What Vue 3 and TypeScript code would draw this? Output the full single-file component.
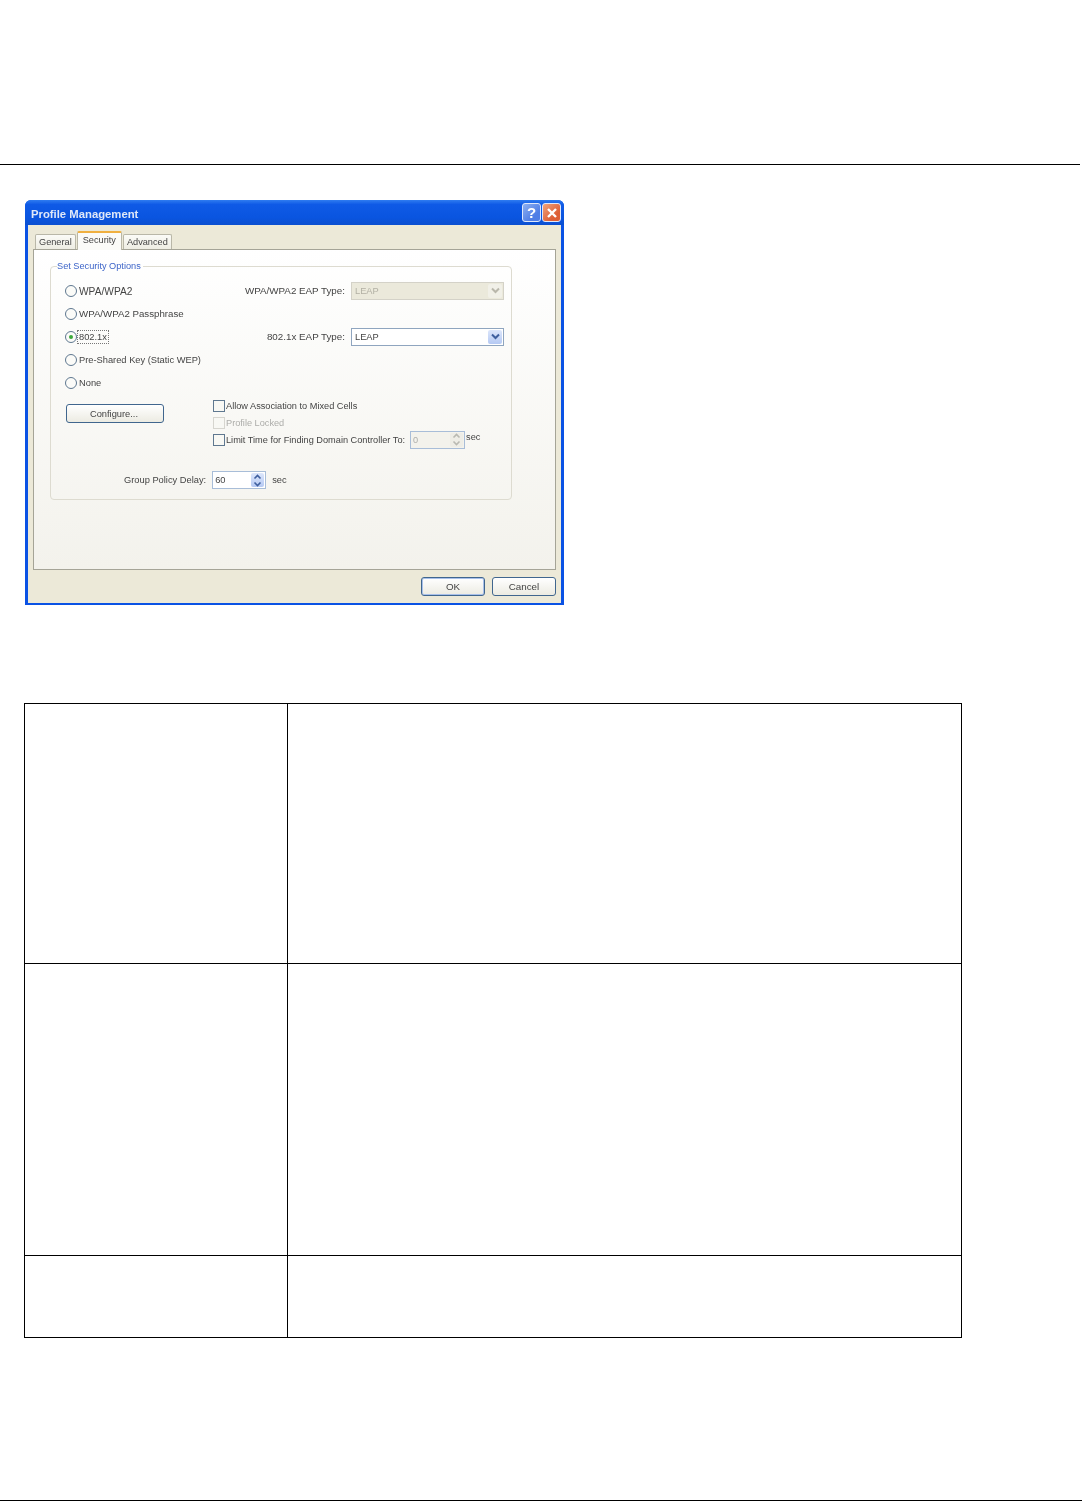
<template>
  <div class="page">
    <header class="page-head"></header>

    <section class="dialog">
      <div class="titlebar">
        <span class="titlebar__text">Profile Management</span>
        <span class="capbtn capbtn--help">?</span>
        <span class="capbtn capbtn--close">
          <svg width="12" height="12" viewBox="0 0 12 12"><path d="M2 2l8 8M10 2l-8 8" stroke="#fff" stroke-width="2.4" /></svg>
        </span>
      </div>

      <div class="dialog__body">
        <div class="tabs">
          <span class="tab tab--first">General</span>
          <span class="tab tab--active">Security</span>
          <span class="tab">Advanced</span>
        </div>

        <div class="panel">
          <fieldset class="group">
            <legend class="group__legend">Set Security Options</legend>

            <div class="options">
              <div v-for="opt in options" :key="opt.label" class="option">
                <span class="radio" :class="{ 'radio--on': opt.selected }"></span>
                <span class="option__label" :class="[opt.labelClass, { 'option__label--focus': opt.selected }]">{{ opt.label }}</span>
                <div v-if="opt.eap" class="eap">
                  <span class="eap__label">{{ opt.eap }}</span>
                  <span class="select" :class="{ 'select--off': opt.eapOff }">
                    <span class="select__value">LEAP</span>
                    <span class="select__btn">
                      <svg width="9" height="7" viewBox="0 0 9 7"><path d="M1 1.5l3.5 3.5L8 1.5" fill="none" :stroke="opt.eapOff ? '#b9b7ab' : '#3f5f9e'" stroke-width="2" /></svg>
                    </span>
                  </span>
                </div>
              </div>
            </div>

            <div class="lower">
              <div class="lower__left">
                <span class="btn btn--configure">Configure...</span>
              </div>
              <div class="checks">
                <div class="check">
                  <span class="box"></span>
                  <span>Allow Association to Mixed Cells</span>
                </div>
                <div class="check check--off">
                  <span class="box box--off"></span>
                  <span>Profile Locked</span>
                </div>
                <div class="check">
                  <span class="box"></span>
                  <span>Limit Time for Finding Domain Controller To:</span>
                  <span class="spin spin--off">
                    <span class="spin__value">0</span>
                    <span class="spin__btns">
                      <svg width="9" height="6" viewBox="0 0 9 6"><path d="M1.5 4.5l3-3 3 3" fill="none" stroke="#b9b9b2" stroke-width="1.6" /></svg>
                      <svg width="9" height="6" viewBox="0 0 9 6"><path d="M1.5 1.5l3 3 3-3" fill="none" stroke="#b9b9b2" stroke-width="1.6" /></svg>
                    </span>
                  </span>
                  <span class="check__unit">sec</span>
                </div>
              </div>
            </div>

            <div class="delay">
              <span class="delay__label">Group Policy Delay:</span>
              <span class="spin spin--delay">
                <span class="spin__value">60</span>
                <span class="spin__btns spin__btns--on">
                  <svg width="9" height="6" viewBox="0 0 9 6"><path d="M1.5 4.5l3-3 3 3" fill="none" stroke="#3f5f9e" stroke-width="1.6" /></svg>
                  <svg width="9" height="6" viewBox="0 0 9 6"><path d="M1.5 1.5l3 3 3-3" fill="none" stroke="#3f5f9e" stroke-width="1.6" /></svg>
                </span>
              </span>
              <span>sec</span>
            </div>
          </fieldset>
        </div>

        <div class="actions">
          <span class="btn btn--default">OK</span>
          <span class="btn">Cancel</span>
        </div>
      </div>
    </section>

    <table class="params">
      <tbody>
        <tr v-for="height in rowHeights" :key="height" :style="{ height: height + 'px' }">
          <td class="params__name"></td>
          <td></td>
        </tr>
      </tbody>
    </table>

    <footer class="page-foot"></footer>
  </div>
</template>

<script setup lang="ts">
interface SecurityOption {
  label: string
  labelClass?: string
  selected?: boolean
  eap?: string
  eapOff?: boolean
}

const options: SecurityOption[] = [
  { label: 'WPA/WPA2', labelClass: 'option__label--caps', eap: 'WPA/WPA2 EAP Type:', eapOff: true },
  { label: 'WPA/WPA2 Passphrase', labelClass: 'option__label--mixed' },
  { label: '802.1x', selected: true, eap: '802.1x EAP Type:' },
  { label: 'Pre-Shared Key (Static WEP)' },
  { label: 'None' },
]

const rowHeights = [260, 292, 82]
</script>

<style>
html,
body {
  background: #fff;
}
</style>

<style scoped>
.page {
  width: 1090px;
  height: 1501px;
  box-sizing: border-box;
  padding-top: 164px;
  overflow: hidden;
  font-family: 'Liberation Sans', Arial, sans-serif;
  font-size: 9.3px;
  color: #444;
}

.page-head {
  width: 1080px;
  height: 1px;
  background: #000;
}

.dialog {
  width: 539px;
  height: 405px;
  margin: 35px 0 0 25px;
  box-sizing: border-box;
  display: flex;
  flex-direction: column;
  background: #0a52e4;
  border-radius: 6px 6px 0 0;
  filter: blur(0.6px);
}

.titlebar {
  height: 25px;
  flex: none;
  display: flex;
  align-items: center;
  gap: 1px;
  padding: 0 3px 0 6px;
  border-radius: 6px 6px 0 0;
  background: linear-gradient(#2f7cf0 0, #0f5ae6 18%, #0a55e0 70%, #0b4fd0 100%);
}

.titlebar__text {
  flex: 1;
  padding-top: 2px;
  color: #dfe8f8;
  font-size: 11.3px;
  font-weight: 700;
}

.capbtn {
  width: 19px;
  height: 19px;
  box-sizing: border-box;
  display: flex;
  align-items: center;
  justify-content: center;
  border: 1px solid #dfe8fa;
  border-radius: 3px;
  color: #fff;
  font-size: 15px;
  font-weight: 700;
}

.capbtn--help {
  background: linear-gradient(135deg, #8db0f0, #4f7ee6 70%);
}

.capbtn--close {
  background: linear-gradient(135deg, #f0a47c, #dd5f36 70%);
}

.dialog__body {
  flex: 1;
  min-height: 0;
  margin: 0 3px 2px;
  padding: 6px 5px 0;
  background: #ece9d8;
  display: flex;
  flex-direction: column;
}

.tabs {
  height: 18px;
  flex: none;
  display: flex;
  align-items: flex-end;
  padding-left: 2px;
  position: relative;
  z-index: 1;
}

.tab {
  height: 15px;
  box-sizing: border-box;
  display: flex;
  align-items: center;
  padding: 0 3px 1px;
  margin-left: 1px;
  border: 1px solid #b9b7a8;
  border-bottom: none;
  border-radius: 2px 2px 0 0;
  background: linear-gradient(#fbfbf7, #eeede3);
  font-size: 9.2px;
}

.tab--first {
  margin-left: 0;
}

.tab--active {
  height: 19px;
  margin-bottom: -1px;
  padding: 0 5px 4px;
  background: #fbfbf8;
  border-top: 2px solid #f0b040;
}

.panel {
  height: 321px;
  flex: none;
  box-sizing: border-box;
  padding: 10px 43px 0 16px;
  border: 1px solid #a5a497;
  background: linear-gradient(#ffffff, #f3f2ec);
}

.group {
  height: 240px;
  margin: 0;
  padding: 0 0 0 14px;
  box-sizing: border-box;
  border: 1px solid #dddbd0;
  border-radius: 4px;
}

.group__legend {
  margin-left: -8px;
  padding: 0 2px 0 0;
  color: #3c64c8;
  font-size: 9.2px;
  line-height: 12px;
}

.options {
  padding-top: 7px;
  padding-right: 7px;
}

.option {
  height: 23px;
  display: flex;
  align-items: center;
  gap: 2px;
}

.radio {
  width: 12px;
  height: 12px;
  box-sizing: border-box;
  flex: none;
  border: 1px solid #5f7890;
  border-radius: 50%;
  background: #fbfbf8;
  display: flex;
  align-items: center;
  justify-content: center;
}

.radio--on::after {
  content: '';
  width: 4px;
  height: 4px;
  border-radius: 50%;
  background: #3aa83a;
}

.option__label--caps {
  font-size: 10.2px;
  padding-top: 1px;
}

.option__label--mixed {
  font-size: 9.7px;
}

.option__label--focus {
  outline: 1px dotted #777;
  outline-offset: 1px;
}

.eap {
  margin-left: auto;
  display: flex;
  align-items: center;
  gap: 6px;
}

.eap__label {
  font-size: 9.8px;
}

.select {
  width: 153px;
  height: 18px;
  box-sizing: border-box;
  display: flex;
  align-items: center;
  justify-content: space-between;
  padding: 0 1px 0 3px;
  border: 1px solid #8fa5bf;
  background: #fff;
}

.select--off {
  border-color: #d4d2c8;
  background: #ebe9db;
  color: #b2b0a4;
}

.select__btn {
  width: 14px;
  height: 14px;
  display: flex;
  align-items: center;
  justify-content: center;
  border-radius: 2px;
  background: linear-gradient(#dce6fb, #b5c9f3);
}

.select--off .select__btn {
  background: #f1f0e8;
}

.lower {
  margin-top: 3px;
  display: grid;
  grid-template-columns: 148px 1fr;
}

.btn {
  width: 64px;
  height: 19px;
  box-sizing: border-box;
  display: flex;
  align-items: center;
  justify-content: center;
  border: 1px solid #40668e;
  border-radius: 3px;
  background: linear-gradient(#ffffff, #ecebe2);
  font-size: 9.8px;
}

.btn--configure {
  width: 98px;
  margin: 7px 0 0 1px;
  padding-right: 2px;
  font-size: 9.3px;
}

.btn--default {
  box-shadow: inset 0 0 0 1px #a8c0ea;
}

.checks {
  display: flex;
  flex-direction: column;
}

.check {
  height: 17px;
  display: flex;
  align-items: center;
  gap: 1px;
  white-space: nowrap;
  font-size: 9.2px;
}

.check--off {
  color: #adadaa;
}

.box {
  width: 12px;
  height: 12px;
  flex: none;
  box-sizing: border-box;
  border: 1px solid #5f7890;
  background: #f8f8f4;
}

.box--off {
  border-color: #d6d5cf;
}

.spin {
  height: 18px;
  flex: none;
  box-sizing: border-box;
  display: flex;
  align-items: center;
  justify-content: space-between;
  padding: 0 1px 0 2px;
  border: 1px solid #a8bdd8;
  background: #fff;
}

.spin--off {
  width: 55px;
  margin-left: 4px;
  color: #adadaa;
  background: #f3f2ec;
}

.spin--delay {
  width: 54px;
}

.spin__btns {
  width: 13px;
  height: 14px;
  display: flex;
  flex-direction: column;
  align-items: center;
  justify-content: center;
  gap: 1px;
  background: #eeede6;
  border-radius: 2px;
}

.spin__btns--on {
  background: linear-gradient(#dce6fb, #b5c9f3);
}

.check__unit {
  margin: -5px 0 0 0;
}

.delay {
  margin-top: 23px;
  height: 18px;
  display: flex;
  align-items: center;
  gap: 6px;
  padding-left: 59px;
}

.actions {
  flex: 1;
  display: flex;
  align-items: flex-start;
  justify-content: flex-end;
  gap: 7px;
  padding-top: 7px;
}

.params {
  width: 938px;
  margin: 98px 0 0 24px;
  border-collapse: collapse;
  table-layout: fixed;
}

.params td {
  padding: 0;
  border: 1px solid #000;
}

.params__name {
  width: 262px;
}

.page-foot {
  width: 1082px;
  height: 1px;
  margin-top: 162px;
  background: #000;
}
</style>
